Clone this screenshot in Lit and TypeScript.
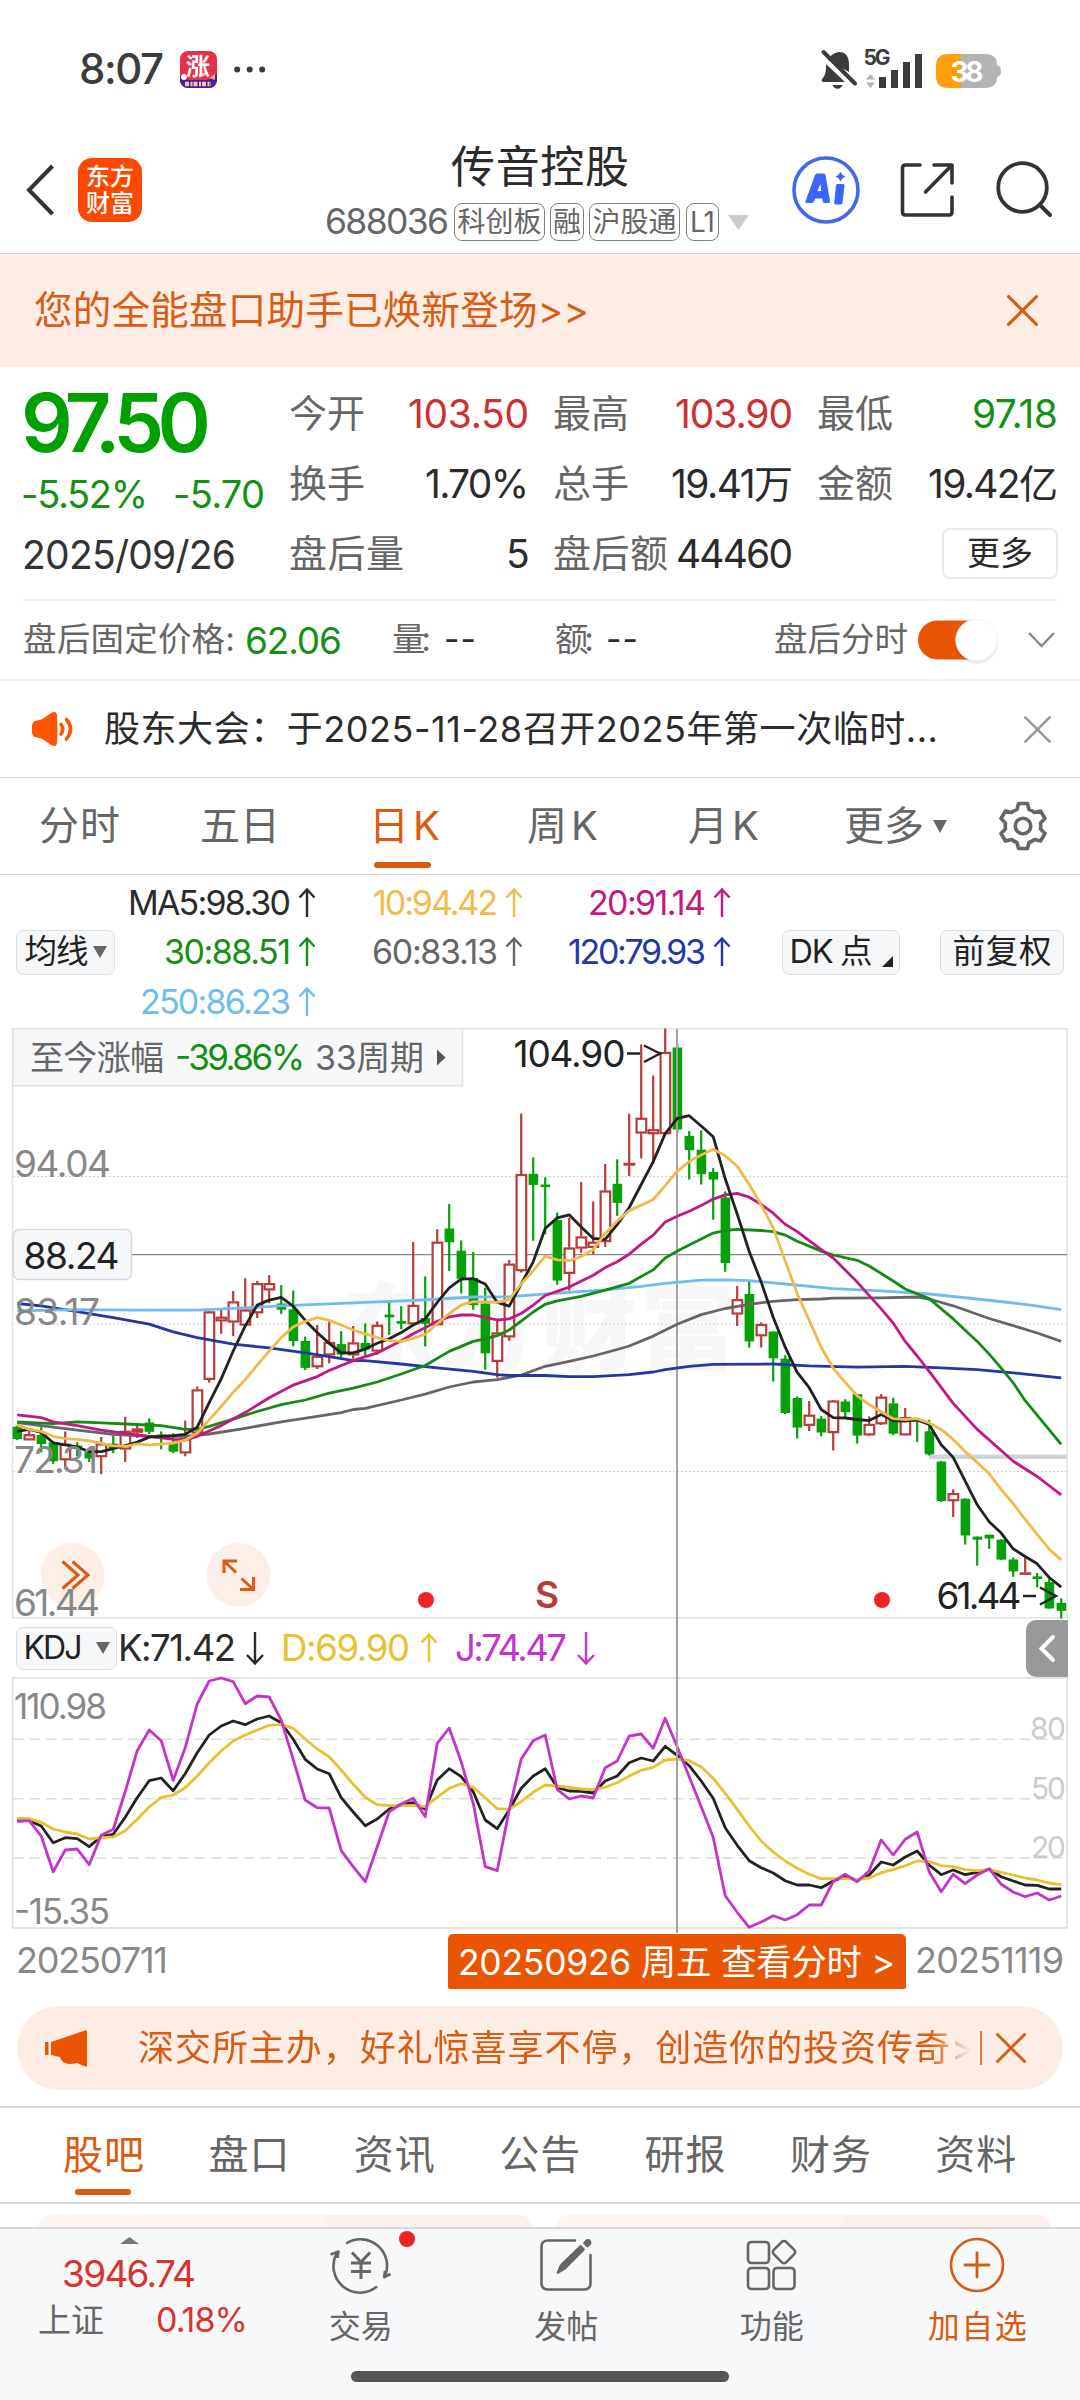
import { LitElement, html, svg, css } from "lit";
import { customElement, property } from "lit/decorators.js";

type Candle = [up: number, high: number, top: number, bottom: number, low: number];

// One entry per trading day: direction, high, body top, body bottom, low (plot units).
const CANDLES: Candle[] = [
  [0, 1060, 1064, 1094, 1098], [1, 1072, 1083, 1098, 1098], [0, 1064, 1085, 1107, 1130], [0, 1100, 1105, 1152, 1160],
  [1, 1075, 1108, 1150, 1174], [0, 1103, 1113, 1117, 1140], [0, 1120, 1128, 1145, 1155], [1, 1090, 1107, 1142, 1187],
  [0, 1087, 1108, 1118, 1132], [1, 1037, 1074, 1122, 1155], [1, 1055, 1068, 1078, 1092], [0, 1041, 1053, 1075, 1082],
  [0, 1075, 1084, 1089, 1122], [0, 1080, 1105, 1127, 1132], [1, 1047, 1092, 1132, 1140], [1, 958, 966, 1080, 1085],
  [1, 760, 762, 940, 948], [1, 758, 776, 787, 820], [1, 708, 736, 790, 826], [1, 675, 757, 798, 800],
  [1, 682, 688, 766, 779], [1, 667, 688, 706, 740], [0, 693, 742, 756, 768], [0, 707, 757, 838, 853],
  [0, 827, 840, 908, 915], [1, 797, 878, 907, 912], [1, 788, 842, 876, 897], [0, 813, 848, 873, 882],
  [1, 800, 843, 876, 885], [0, 793, 845, 860, 880], [1, 788, 797, 866, 875], [0, 738, 771, 776, 823],
  [0, 748, 788, 792, 808], [1, 580, 745, 795, 797], [0, 670, 780, 793, 853], [1, 547, 580, 797, 798],
  [0, 481, 546, 580, 656], [0, 576, 604, 675, 715], [0, 606, 675, 744, 757], [0, 700, 742, 870, 914],
  [1, 785, 817, 893, 935], [1, 627, 637, 829, 838], [1, 244, 403, 656, 660], [0, 359, 403, 430, 577],
  [0, 411, 431, 435, 560], [0, 503, 524, 680, 692], [1, 517, 595, 663, 707], [1, 423, 566, 597, 608],
  [1, 474, 580, 595, 612], [1, 376, 446, 580, 593], [0, 364, 429, 477, 512], [1, 245, 374, 380, 408],
  [1, 64, 256, 296, 362], [1, 145, 286, 298, 376], [1, 22, 84, 298, 300], [0, 60, 73, 285, 297],
  [0, 290, 304, 339, 417], [0, 288, 340, 402, 430], [0, 387, 398, 416, 522], [0, 448, 465, 634, 658],
  [1, 695, 730, 769, 800], [0, 683, 717, 839, 856], [1, 790, 795, 826, 856], [0, 814, 815, 883, 945],
  [0, 876, 886, 1026, 1030], [0, 984, 989, 1064, 1094], [1, 996, 1032, 1060, 1074], [0, 1035, 1043, 1077, 1088],
  [1, 993, 995, 1079, 1125], [0, 991, 998, 1024, 1038], [0, 978, 979, 1085, 1107], [1, 1036, 1056, 1085, 1087],
  [1, 977, 985, 1056, 1058], [0, 987, 1003, 1080, 1085], [1, 1014, 1038, 1085, 1086], [0, 1040, 1044, 1048, 1103],
  [0, 1045, 1076, 1134, 1138], [0, 1152, 1155, 1256, 1260], [1, 1227, 1237, 1257, 1299], [0, 1250, 1252, 1346, 1371],
  [0, 1350, 1351, 1357, 1426], [0, 1345, 1346, 1354, 1382], [0, 1357, 1359, 1409, 1411], [0, 1405, 1411, 1440, 1455],
  [1, 1400, 1444, 1447, 1447], [0, 1445, 1455, 1459, 1483], [0, 1460, 1470, 1537, 1538], [0, 1511, 1524, 1543, 1564],
];

const MA5 = [1075, 1070, 1078, 1105, 1110, 1116, 1128, 1128, 1120, 1112, 1103, 1090, 1088, 1086, 1083, 1064, 1000, 938, 865, 800, 745, 732, 725, 748, 785, 817, 845, 870, 870, 860, 845, 833, 817, 797, 781, 738, 700, 677, 676, 690, 738, 748, 690, 632, 545, 517, 509, 541, 571, 573, 535, 490, 430, 370, 297, 257, 250, 277, 305, 415, 507, 605, 685, 777, 855, 921, 961, 1018, 1039, 1040, 1044, 1047, 1031, 1047, 1048, 1045, 1057, 1110, 1143, 1205, 1267, 1311, 1341, 1382, 1402, 1421, 1457, 1482];
const MA10 = [1058, 1070, 1075, 1088, 1094, 1096, 1100, 1106, 1113, 1114, 1108, 1110, 1108, 1106, 1098, 1080, 1045, 1010, 973, 940, 902, 865, 830, 802, 788, 778, 785, 797, 810, 820, 830, 838, 840, 832, 821, 794, 767, 745, 736, 737, 738, 730, 690, 655, 617, 627, 629, 618, 600, 558, 525, 498, 484, 469, 433, 395, 370, 353, 338, 355, 382, 430, 483, 543, 630, 715, 785, 855, 910, 947, 982, 1005, 1024, 1042, 1044, 1042, 1053, 1070, 1096, 1128, 1156, 1186, 1227, 1264, 1305, 1344, 1383, 1411];

// Slower averages, as day index / value pairs.
const MA20 = [0, 1032, 2, 1039, 3, 1050, 5, 1060, 7, 1072, 9, 1080, 11, 1088, 13, 1096, 14, 1098, 15, 1088, 17, 1060, 19, 1026, 21, 987, 23, 954, 25, 932, 26, 916, 28, 890, 30, 870, 32, 838, 33, 820, 34, 804, 35, 787, 36, 776, 37, 771, 38, 771, 39, 777, 40, 784, 41, 781, 42, 767, 43, 745, 44, 720, 46, 698, 48, 667, 49, 647, 50, 632, 51, 612, 52, 586, 53, 562, 54, 528, 55, 513, 56, 500, 57, 485, 58, 468, 59, 457, 60, 453, 61, 463, 62, 482, 63, 505, 64, 534, 65, 553, 67, 600, 68, 622, 70, 685, 72, 755, 73, 792, 74, 840, 75, 878, 76, 918, 78, 1002, 80, 1070, 82, 1125, 83, 1153, 85, 1193, 87, 1241];
const MA30 = [0, 1050, 3, 1055, 5, 1050, 7, 1053, 10, 1057, 12, 1060, 14, 1070, 15, 1070, 16, 1062, 18, 1043, 20, 1023, 22, 1005, 24, 993, 26, 975, 28, 962, 30, 946, 32, 925, 34, 903, 36, 866, 38, 840, 39, 833, 40, 825, 41, 810, 42, 787, 43, 763, 44, 743, 45, 734, 47, 722, 49, 706, 51, 688, 53, 653, 54, 622, 55, 604, 57, 572, 58, 557, 59, 550, 60, 547, 62, 550, 63, 553, 64, 562, 65, 578, 67, 604, 68, 614, 70, 628, 71, 643, 73, 682, 74, 703, 76, 728, 78, 781, 80, 840, 81, 873, 82, 910, 83, 948, 84, 995, 87, 1109];
const MA60 = [0, 1052, 2, 1060, 5, 1072, 8, 1083, 11, 1088, 14, 1088, 16, 1082, 19, 1067, 22, 1050, 25, 1036, 27, 1026, 28, 1018, 29, 1015, 32, 993, 34, 978, 36, 959, 38, 946, 40, 940, 42, 928, 44, 905, 46, 892, 48, 878, 50, 861, 51, 852, 53, 826, 55, 795, 57, 770, 59, 754, 61, 743, 63, 735, 65, 731, 67, 729, 68, 727, 72, 726, 75, 724, 76, 729, 78, 747, 81, 780, 83, 799, 85, 818, 87, 840];
const MA120 = [0, 741, 2, 747, 5, 762, 8, 778, 11, 795, 13, 815, 15, 830, 18, 847, 21, 857, 24, 870, 26, 880, 28, 890, 29, 890, 32, 899, 35, 909, 38, 918, 40, 927, 41, 929, 44, 929, 46, 932, 48, 932, 51, 927, 53, 920, 54, 914, 56, 905, 58, 900, 63, 899, 66, 904, 70, 907, 74, 905, 77, 909, 80, 914, 83, 922, 87, 935];
const MA250 = [0, 760, 5, 757, 10, 758, 15, 758, 19, 752, 22, 747, 26, 742, 29, 738, 33, 733, 38, 724, 41, 723, 45, 714, 49, 705, 52, 696, 54, 688, 57, 680, 59, 679, 61, 681, 64, 690, 68, 702, 72, 708, 76, 716, 80, 729, 84, 743, 87, 757];

const J = [665, 662, 708, 815, 750, 747, 794, 706, 688, 575, 452, 390, 422, 541, 443, 312, 243, 234, 245, 311, 288, 291, 360, 478, 600, 623, 624, 752, 800, 845, 740, 635, 612, 595, 650, 430, 384, 485, 610, 800, 812, 630, 477, 422, 405, 568, 597, 588, 594, 503, 483, 408, 402, 445, 355, 440, 530, 620, 712, 887, 937, 982, 966, 947, 960, 944, 915, 915, 845, 823, 845, 812, 720, 765, 718, 696, 815, 875, 823, 851, 825, 806, 853, 876, 890, 879, 900, 888];
const K = [660, 662, 678, 728, 713, 716, 740, 710, 703, 652, 593, 542, 534, 572, 521, 458, 405, 378, 363, 374, 357, 348, 368, 418, 478, 507, 521, 593, 636, 677, 657, 627, 614, 608, 628, 540, 506, 530, 575, 660, 686, 630, 565, 528, 506, 562, 573, 574, 579, 543, 528, 488, 474, 483, 439, 466, 497, 543, 595, 683, 736, 782, 803, 819, 842, 855, 855, 863, 843, 830, 840, 825, 786, 795, 771, 753, 795, 824, 810, 824, 817, 808, 830, 843, 855, 856, 867, 867];
const D = [655, 656, 667, 687, 696, 702, 717, 713, 711, 692, 658, 621, 592, 585, 563, 528, 488, 453, 423, 405, 390, 376, 373, 385, 417, 447, 470, 510, 553, 592, 614, 617, 617, 616, 620, 592, 565, 551, 562, 593, 626, 628, 605, 577, 555, 558, 562, 567, 569, 562, 548, 528, 511, 502, 480, 477, 482, 501, 535, 580, 628, 678, 723, 756, 783, 805, 823, 836, 836, 836, 838, 834, 818, 809, 797, 783, 785, 797, 800, 809, 812, 809, 817, 825, 834, 840, 849, 854];

const dayX = (i: number) => 17.2 + 12 * i;
const priceY = (v: number) => +(v / 2.6133 - 8).toFixed(1);
const kdjY = (v: number) => +(v / 3 - 77).toFixed(1);
const series = (values: number[], y: (v: number) => number) => values.map((v, i) => `${dayX(i)},${y(v)}`).join(" ");
const pairs = (flat: number[]) => {
  const out: string[] = [];
  for (let n = 0; n < flat.length; n += 2) out.push(`${dayX(flat[n])},${priceY(flat[n + 1])}`);
  return out.join(" ");
};

/** Sets a run of text to an exact width by spreading the letter spacing. */
@customElement("fit-text")
class FitText extends LitElement {
  @property({ type: Number }) w = 0;
  @property() text = "";
  static styles = css`
    :host { display: inline-block; white-space: nowrap; flex: none; }
    span { display: inline-block; white-space: pre; }
  `;
  render() {
    return html`<span>${this.text}</span>`;
  }
  updated() {
    const span = this.renderRoot.querySelector("span")!;
    span.style.letterSpacing = "0px";
    const gap = (this.w - span.getBoundingClientRect().width) / Math.max(1, [...this.text].length - 1);
    span.style.letterSpacing = `${gap.toFixed(3)}px`;
    this.style.width = `${this.w}px`;
  }
}

const fit = (text: string, w: number, cls = "") => html`<fit-text class=${cls} .text=${text} .w=${w}></fit-text>`;
const upArrow = html`<svg class="arrow" width="18" height="30" viewBox="0 0 18 30"><path d="M9 29V2M1.5 9.5 9 1.5l7.5 8" /></svg>`;
const downArrow = html`<svg class="arrow" width="18" height="33" viewBox="0 0 18 33"><path d="M9 0v31M1 23l8 8.500 8-8.500" /></svg>`;

/** Daily candles with moving averages. */
@customElement("price-chart")
class PriceChart extends LitElement {
  static styles = css`
    :host { display: block; height: 590px; }
    svg { display: block; overflow: visible; }
    text { font-family: Inter, "Noto Sans CJK SC", sans-serif; font-size: 37px; }
    .frame { fill: none; stroke: #e2e2e2; stroke-width: 1.5; }
    .grid { stroke: #d4d4d4; stroke-width: 1; stroke-dasharray: 2 2; }
    .cross { stroke: #868686; stroke-width: 1.3; }
    .vcross { stroke: #a4a4a4; stroke-width: 2; }
    .axis { fill: #888; }
    .mark { fill: #222; }
    .line { fill: none; stroke-width: 2.8; stroke-linejoin: round; }
    .up { stroke: #b93a38; fill: #fff; stroke-width: 2.2; }
    .down { stroke: #06a00a; fill: #06a00a; stroke-width: 2.2; }
    .pen { fill: none; stroke: #222; stroke-width: 2.4; }
    .act { fill: none; stroke: #dc5a14; stroke-width: 3; }
    .halo { fill: #fdefe7; }
    .dot { fill: #ee2424; }
    .sell { fill: #b93a38; font-weight: 600; }
    .strip { fill: #f7f8fa; stroke: #e0e2e5; stroke-width: 1.5; }
    .cap { font-size: 34px; fill: #666; }
    .loss { font-size: 35px; fill: #109010; }
    .water { font-size: 96px; font-weight: 900; fill: #f7f7f7; }
  `;
  render() {
    const body = CANDLES.map(([up, h, t, b, l], i) => {
      const x = dayX(i);
      const top = priceY(t), bot = priceY(b);
      if (!up) return svg`<g class="down"><path d="M${x} ${priceY(h)}V${priceY(l)}"/><rect x=${x - 3.5} y=${top + 0.7} width="7.4" height=${Math.max(0.4, bot - top - 1.4)} /></g>`;
      return svg`<g class="up"><path d="M${x} ${priceY(h)}V${top}M${x} ${bot}V${priceY(l)}"/><rect x=${x - 4.6} y=${top + 0.8} width="9.600" height=${Math.max(0.4, bot - top - 1.6)} /></g>`;
    });
    const line = (points: string, color: string) => svg`<polyline class="line" points=${points} stroke=${color} />`;
    return html`<svg width="1080" height="590" viewBox="0 0 1080 590">
      <text class="water" x="342" y="335" textLength="394">东方财富</text>
      <rect class="frame" x="12.500" y="0.700" width="1054.500" height="589" />
      <path class="grid" d="M13 148.500H1067M13 296H1067M13 443.500H1067" />
      <rect x="929" y="426.500" width="138" height="4.500" fill="#cfd2d7" />
      <path class="cross" d="M131 226.600H1067" />
      ${body}
      <path d="M677 1V589" class="vcross" />
      ${line(pairs(MA60), "#666")}
      ${line(pairs(MA120), "#2338a4")}
      ${line(pairs(MA250), "#70bcf0")}
      ${line(pairs(MA30), "#148c14")}
      ${line(pairs(MA20), "#c01a82")}
      ${line(series(MA5, priceY), "#222")}
      ${line(series(MA10, priceY), "#f0ba4a")}
      <path class="strip" d="M13 .7H462.500V57.700H13z" />
      <text class="cap" x="30" y="42" textLength="134">至今涨幅</text>
      <text class="loss" x="175" y="42" textLength="130">-39.86%</text>
      <text class="cap" x="315" y="42" textLength="109">33周期</text>
      <path d="M437 21.500v16l8.500-8z" fill="#555" />
      <circle class="halo" cx="72.500" cy="547" r="32" />
      <path class="act" d="M62.500 533.500 78 547 62.500 560.500M72.500 533.500 88 547 72.500 560.500" />
      <circle class="halo" cx="238.500" cy="547" r="32" />
      <path class="act" d="M224 545V533H237M224.500 533.500 236 544.500M253.500 549V561.500H240M253 561 241.500 550.500" />
      <text class="axis" x="14" y="148.500" textLength="97">94.04</text>
      <text class="axis" x="14" y="296.500" textLength="86">83.17</text>
      <text class="axis" x="14" y="444.500" textLength="84">72.31</text>
      <text class="axis" x="14" y="587.500" textLength="86">61.44</text>
      <rect x="13.500" y="201.500" width="118" height="50" rx="6" fill="#f7f8fa" stroke="#d6d9dd" stroke-width="1.500" />
      <text class="mark" x="23.500" y="241" textLength="96">88.24</text>
      <text class="mark" x="513.500" y="39" textLength="112">104.90</text>
      <path class="pen" d="M627 25.500H640M644 17.500 660 25.500 644 34" />
      <text class="mark" x="936.500" y="581" textLength="85">61.44</text>
      <path class="pen" d="M1023 568H1036M1040 559.500 1056 568 1040 576.500" />
      <circle class="dot" cx="426" cy="572" r="8" />
      <circle class="dot" cx="882" cy="572" r="8" />
      <text class="sell" x="535" y="580" textLength="25">S</text>
    </svg>`;
  }
}

/** Oscillator pane below the candles. */
@customElement("kdj-chart")
class KdjChart extends LitElement {
  static styles = css`
    :host { display: block; height: 253px; }
    svg { display: block; overflow: visible; }
    text { font-family: Inter, sans-serif; font-size: 35px; fill: #888; }
    .level { font-size: 30px; fill: #ccc; }
    .frame { fill: none; stroke: #e0e0e0; stroke-width: 1.7; }
    .grid { stroke: #dcdcdc; stroke-width: 1.500; stroke-dasharray: 10.500 6; }
    .line { fill: none; stroke-width: 2.8; stroke-linejoin: round; }
  `;
  render() {
    return html`<svg width="1080" height="253" viewBox="0 0 1080 253">
      <rect class="frame" x="12.500" y="0.800" width="1054.500" height="250.200" />
      <path class="grid" d="M13 62.300H1067M13 121.700H1067M13 181H1067" />
      <text x="14" y="42" textLength="93">110.98</text>
      <text x="14" y="247" textLength="96">-15.35</text>
      <text class="level" x="1030" y="62" textLength="36">80</text>
      <text class="level" x="1031" y="122" textLength="35">50</text>
      <text class="level" x="1031" y="181" textLength="35">20</text>
      <polyline class="line" stroke="#222" points=${series(K, kdjY)} />
      <polyline class="line" stroke="#e8c030" points=${series(D, kdjY)} />
      <polyline class="line" stroke="#c334cb" points=${series(J, kdjY)} />
    </svg>`;
  }
}

@customElement("app-root")
class AppRoot extends LitElement {
  static styles = css`
    :host { display: block; width: 1080px; height: 2400px; overflow: hidden; background: #fff; color: #2b2b2b; font-family: Inter, "Noto Sans CJK SC", sans-serif; font-size: 38px; line-height: 1; }
    * { box-sizing: border-box; }
    svg { display: block; flex: none; overflow: visible; }
    .row { display: flex; align-items: center; }
    .status { height: 122px; padding: 16px 78px 0 79px; color: #3c3c3c; }
    .clock { font-size: 42px; font-weight: 500; margin-right: 16px; }
    .appicon { margin-right: 17px; }
    .grow { flex: 1; }
    .header { height: 132px; border-bottom: 1.500px solid #d5d8d8; display: grid; grid-template-columns: 325px 426px 329px; }
    .left { padding: 4px 0 0 26px; gap: 24px; }
    .logo { width: 64px; height: 64px; border-radius: 14px; background: #fd4800; color: #fff; font-size: 24px; line-height: 27px; font-weight: 500; text-align: center; padding-top: 5px; }
    .mid { display: flex; flex-direction: column; }
    .name { font-size: 44px; height: 64px; line-height: 64px; margin: 13px 0 0 126px; }
    .sub { color: #666; font-size: 35.500px; height: 38px; margin-top: 4px; }
    .sub > fit-text { margin-right: 5px; }
    .tag { height: 38px; border: 1.500px solid #808080; border-radius: 8px; font-size: 28px; display: flex; align-items: center; justify-content: center; margin-right: 5px; flex: none; }
    .t3 { width: 91px; } .t1 { width: 34px; } .tl { width: 33px; margin-left: 1px; }
    .caret { margin-left: 4px; }
    .right { padding: 4px 0 0 43px; }
    .banner { height: 113px; background: #fdede4; color: #d95c14; padding: 0 42px 0 34px; justify-content: space-between; font-size: 38.500px; }
    .quote { display: flex; padding: 11px 22px 0 24px; height: 232px; }
    .summary { width: 265px; color: #149114; }
    .price { height: 90px; display: flex; align-items: center; font-size: 81px; font-weight: 600; color: #00a000; margin-left: -3px; }
    .change { height: 52px; display: flex; align-items: center; gap: 25px; font-size: 38px; margin-left: -3px; }
    .date { height: 68px; display: flex; align-items: center; color: #333; font-size: 39px; margin-left: -2px; }
    .stats { display: grid; grid-template-columns: 240px 240px 241px; grid-template-rows: repeat(3, 70px); column-gap: 24px; font-size: 39px; }
    .stat { display: flex; align-items: center; justify-content: space-between; color: #666; white-space: nowrap; }
    .stat .k { font-size: 38px; }
    .ink { color: #2b2b2b; } .red { color: #d02f2f; } .green { color: #149114; }
    .more { justify-self: end; align-self: center; width: 116px; height: 51px; border: 2px solid #e7e9eb; border-radius: 8px; font-size: 33px; color: #2b2b2b; display: flex; align-items: center; justify-content: center; }
    .after { display: grid; align-items: center; margin: 0 23px; height: 80px; border-top: 2px solid #eee; color: #666; font-size: 33.500px; white-space: nowrap; grid-template-columns: 222px 147px 52px 111px 51px 168px 144px 110px 30px; }
    .fixed { font-size: 37px; color: #149114; }
    .notice { height: 99px; border-top: 2px solid #eee; border-bottom: 1.500px solid #d6d6d6; padding: 0 29px 0 31px; font-size: 36px; }
    .notice fit-text { margin-left: 31px; }
    .tabs { height: 97px; border-bottom: 1.500px solid #d6d6d6; color: #666; font-size: 40px; display: grid; grid-template-columns: 200px 169px 158px 161px 156px 155px 81px; }
    .tab { position: relative; display: flex; align-items: center; }
    .tabs .tab:first-child { padding-left: 39px; }
    .on { color: #dc5a10; }
    .on::after { content: ""; position: absolute; width: 57px; height: 6.500px; border-radius: 3px; background: #dc5a10; bottom: 6px; left: 5px; }
    .k2 { display: flex; gap: 4px; }
    .ma { height: 153px; display: grid; grid-template-columns: 115px 201px 207px 208px 169px 180px; grid-template-rows: repeat(3, 49.500px); padding-top: 3px; font-size: 34px; align-items: center; }
    .val { display: flex; align-items: center; justify-content: flex-end; gap: 7px; }
    .arrow { fill: none; stroke: currentColor; stroke-width: 2.400; }
    .btn { height: 45px; border: 1.500px solid #dcdfe3; border-radius: 7px; background: #f6f7f9; font-size: 32.500px; display: flex; align-items: center; justify-content: center; color: #222; }
    .b1 { grid-column: 1; grid-row: 2; margin-left: 16px; gap: 4px; }
    .b2 { grid-column: 5; grid-row: 2; margin-left: 51px; gap: 9px; }
    .b3 { grid-column: 6; grid-row: 2; margin: 0 16px 0 40px; }
    .corner { margin-top: 18px; }
    .first { grid-column: 2; }
    .c5 { color: #2b2b2b; } .c10 { color: #f0bb4d; } .c20 { color: #c2187f; } .c30 { color: #149114; } .c60 { color: #666; } .c120 { color: #2338a4; } .c250 { color: #70bcf0; }
    .charts { position: relative; }
    .cursor { position: absolute; left: 676px; top: 588px; width: 2px; height: 317px; background: #a0a2a4; }
    .kdjbar { height: 59px; padding: 1px 12px 0 16px; font-size: 36.500px; }
    .kdjbar .btn { width: 101px; height: 43px; gap: 13px; font-size: 32px; margin-right: 1px; }
    .kval { display: flex; align-items: center; gap: 10px; margin-right: 17px; }
    .kd { color: #e8c030; } .kj { color: #c334cb; }
    .collapse { width: 42px; height: 57px; background: #999; border-radius: 10px 0 0 10px; display: flex; align-items: center; justify-content: center; }
    .dates { height: 76px; padding: 0 16px; display: flex; color: #888; font-size: 36px; }
    .dates > fit-text { height: 60px; line-height: 60px; }
    .pick { margin: 4px 9px 0 280px; width: 458px; height: 55px; background: #e95502; color: #fff; border-radius: 5px 5px 2px 2px; line-height: 58px; padding-left: 10px; font-size: 35.500px; }
    .promo { margin: 0 17px; height: 84px; border-radius: 42px; background: #fdede4; color: #d95c14; padding: 0 36px 0 28px; font-size: 36px; }
    .marquee { margin-left: 51px; width: 842px; white-space: nowrap; letter-spacing: .95px; line-height: 50px; -webkit-mask-image: linear-gradient(90deg, #000 94%, transparent 99%); mask-image: linear-gradient(90deg, #000 94%, transparent 99%); }
    .bar { width: 1.500px; height: 34px; background: #dc7a40; margin-right: 14px; }
    .nav { margin-top: 16px; height: 98px; border-top: 2px solid #d9dadb; border-bottom: 2px solid #d9dadb; display: grid; grid-template-columns: repeat(7, 145.400px); padding-left: 63px; font-size: 40px; color: #666; }
    .nav .on::after { bottom: 7px; left: 12px; width: 56px; }
    .cards { height: 23px; padding: 11px 30px 0 38px; gap: 24px; display: flex; }
    .card { width: 494px; height: 12px; border-radius: 14px 14px 0 0; background: linear-gradient(90deg, #fff6f2 0 58%, #fdf1ee 58%); }
    .footer { height: 173px; border-top: 2px solid #d6d8dc; background: #f7f8fa; display: grid; grid-template-columns: 258px repeat(4, 205.500px); position: relative; color: #666; font-size: 32px; }
    .index { display: flex; flex-direction: column; }
    .index .tri { margin: 8px 0 0 120px; }
    .idx { font-size: 37px; color: #d9332f; margin: 12px 0 0 62px; height: 36px; line-height: 36px; }
    .idxrow { display: flex; justify-content: space-between; align-items: center; width: 210px; margin: 3px 0 0 38px; height: 50px; font-size: 33px; }
    .idxrow fit-text + fit-text { color: #d9332f; font-size: 34px; }
    .item { display: flex; flex-direction: column; align-items: center; padding-top: 4px; position: relative; }
    .item span { height: 36px; line-height: 36px; margin-top: 12px; }
    .badge { position: absolute; left: 140.500px; top: 2px; width: 16px; height: 16px; border-radius: 50%; background: #ee2424; }
    .add { color: #d95a12; }
    .ic { fill: none; stroke: currentColor; stroke-width: 2.600; stroke-linecap: round; stroke-linejoin: round; }
    .home { position: absolute; left: 351px; top: 142px; width: 378px; height: 11px; border-radius: 6px; background: #555756; }
    .x { fill: none; stroke: currentColor; stroke-width: 3; stroke-linecap: round; }
    .grey { color: #999; }
  `;

  render() {
    const stat = (k: string, kw: number, v: string, vw: number, cls: string) =>
      html`<div class="stat">${fit(k, kw, "k")}${fit(v, vw, cls)}</div>`;
    const ma = (t: string, w: number, cls: string) => html`<div class="val ${cls}">${fit(t, w)}${upArrow}</div>`;
    const close = (s: number, cls = "") =>
      html`<svg class="x ${cls}" width=${s} height=${s} viewBox="0 0 30 30"><path d="M1.500 1.500 28.500 28.500M28.500 1.500 1.500 28.500" /></svg>`;
    const nav = ["股吧", "盘口", "资讯", "公告", "研报", "财务", "资料"];
    return html`
      <div class="status row">
        ${fit("8:07", 85, "clock")}
        <svg class="appicon" width="37" height="37" viewBox="0 0 37 37">
          <defs><clipPath id="ai"><rect width="37" height="37" rx="8" /></clipPath></defs>
          <g clip-path="url(#ai)">
            <rect width="37" height="37" fill="#e8304a" />
            <path d="M0 24 9 29 28 29 37 23V37H0z" fill="#4a1f9e" />
            <circle cx="4" cy="26" r="3" fill="#fff" /><path d="M29 27l6-4v6z" fill="#f8a56a" />
            <text x="6" y="24" font-size="24" font-weight="700" fill="#fff" font-family="Noto Sans CJK SC">涨</text>
            <path d="M5 33H31" stroke="#f6c8a0" stroke-width="4.500" stroke-dasharray="4 1.500 2 1" />
          </g>
        </svg>
        <svg width="32" height="7" viewBox="0 0 32 7" fill="#3c3c3c"><circle cx="3.200" cy="3.500" r="3" /><circle cx="15.700" cy="3.500" r="3" /><circle cx="28.200" cy="3.500" r="3" /></svg>
        <div class="grow"></div>
        <svg width="181" height="40" viewBox="822 47 181 40">
          <path d="M829 58c2-4 5-7 11-8 8 0 10 6 10 13v7zM827 62 846 80H824c-2-1-2-2 0-4 3-4 3-8 3-14z" fill="#3c3c3c" />
          <path d="M833.500 83h10c-2 5-8 5-10 0z" fill="#3c3c3c" />
          <path d="M824.500 50 856 81.500" stroke="#3c3c3c" stroke-width="4" stroke-linecap="round" />
          <text x="864.500" y="63" font-size="21" font-weight="700" fill="#3c3c3c" textLength="27">5G</text>
          <path d="M867 77.500 871.500 72 876 77.500zM867 80.500H876L871.500 86z" fill="#b4b4b4" />
          <path d="M880 75h7v11h-7zM892 68h7v18h-7zM904 60h7v26h-7zM916 52h7v34h-7z" fill="#3c3c3c" />
          <path d="M962 52h24q12 0 12 11 4 1 4 6t-4 6q0 11-12 11H962z" fill="#b3b3b3" />
          <path d="M962 52H949q-12 0-12 12v10q0 12 12 12h13z" fill="#ff9f0a" />
          <text x="951.500" y="79.500" font-size="28" font-weight="700" fill="#fff" textLength="33">38</text>
        </svg>
      </div>

      <div class="header">
        <div class="left row">
          <svg width="28" height="52" viewBox="0 0 28 52"><path d="M26.500 2 3 26 26.500 50" fill="none" stroke="#333" stroke-width="4" /></svg>
          <div class="logo">东方<br />财富</div>
        </div>
        <div class="mid">
          <div class="name">${fit("传音控股", 178)}</div>
          <div class="sub row">
            ${fit("688036", 124)}
            <span class="tag t3">科创板</span><span class="tag t1">融</span><span class="tag t3">沪股通</span><span class="tag tl">${fit("L1", 25)}</span>
            <svg class="caret" width="21" height="15" viewBox="0 0 21 15"><path d="M0 0H21L10.500 15z" fill="#ccc" /></svg>
          </div>
        </div>
        <div class="right row">
          <svg width="258" height="68" viewBox="794 156 258 68">
            <circle cx="826" cy="190" r="32" fill="none" stroke="#4169e8" stroke-width="3.600" />
            <path fill="#3a66fb" fill-rule="evenodd" d="M815 175q.5-1.500 2-1.500h6.500q1.800 0 2 1.500l4.500 26q.3 2-1.500 2h-4q-1.500 0-1.700-1.500l-.5-3h-7l-1.500 3q-.7 1.500-2 1.500h-5q-2 0-1.200-2zM817.500 191h3.800l-1-7z" />
            <path fill="#3a66fb" d="M837.500 184h5.500q1.700 0 1.500 1.700l-2 17q-.2 1.700-1.800 1.700h-5q-1.800 0-1.500-1.700l1.700-17q.2-1.700 1.600-1.700zM840.500 171.500q1.500 4 5 5-3.500 1.200-5 5-1.500-3.800-5-5 3.500-1 5-5z" />
            <path fill="none" stroke="#333" stroke-width="3.600" stroke-linecap="round" stroke-linejoin="round" d="M920 165H905.500q-3 0-3 3V212q0 3 3 3H949q3 0 3-3V197M934 165H952V183M951 166 925.500 192" />
            <circle cx="1022.500" cy="187.500" r="24.300" fill="none" stroke="#333" stroke-width="3.800" />
            <path d="M1040 205 1050 215" stroke="#333" stroke-width="4" stroke-linecap="round" />
          </svg>
        </div>
      </div>

      <div class="banner row">${fit("您的全能盘口助手已焕新登场>>", 555)}${close(31)}</div>

      <div class="quote">
        <div class="summary">
          <div class="price">${fit("97.50", 190)}</div>
          <div class="change">${fit("-5.52%", 127)}${fit("-5.70", 92)}</div>
          <div class="date">${fit("2025/09/26", 214)}</div>
        </div>
        <div class="stats">
          ${stat("今开", 76, "103.50", 121, "red")}${stat("最高", 76, "103.90", 118, "red")}${stat("最低", 76, "97.18", 86, "green")}
          ${stat("换手", 76, "1.70%", 104, "ink")}${stat("总手", 76, "19.41万", 122, "ink")}${stat("金额", 76, "19.42亿", 130, "ink")}
          ${stat("盘后量", 115, "5", 23, "ink")}${stat("盘后额", 115, "44460", 117, "ink")}
          <div class="more">更多</div>
        </div>
      </div>

      <div class="after">
        ${fit("盘后固定价格:", 212)}${fit("62.06", 97, "fixed")}
        ${fit("量:", 39)}${fit("--", 32, "ink")}${fit("额:", 39)}${fit("--", 32, "ink")}
        ${fit("盘后分时", 134)}
        <svg width="80" height="42" viewBox="0 0 80 42">
          <rect x="0" y="1.500" width="78" height="39" rx="19.500" fill="#ea5504" />
          <circle cx="58.500" cy="23.500" r="21.500" fill="#000" opacity=".07" />
          <circle cx="58.500" cy="21" r="20.800" fill="#fff" stroke="#eee" stroke-width=".8" />
        </svg>
        <svg width="27" height="16" viewBox="0 0 27 16"><path d="M1 1 13.500 14 26 1" fill="none" stroke="#888" stroke-width="2.400" /></svg>
      </div>

      <div class="notice row">
        <svg width="42" height="36" viewBox="0 0 42 36">
          <path d="M1 15q0-5 5-5.500 4-.2 7-2.500L20 2q6-3 6 3 1 13 0 26 0 6-6 3l-7-5q-3-2.300-7-2.500-5-.5-5-5.500z" fill="#fe5500" />
          <path d="M30 13.500q3.500 4.500 0 9.500M35.500 8.500q8 9.500 0 19.500" fill="none" stroke="#fe5500" stroke-width="3.600" stroke-linecap="round" />
        </svg>
        ${fit("股东大会：于2025-11-28召开2025年第一次临时...", 834)}
        <div class="grow"></div>${close(27, "grey")}
      </div>

      <div class="tabs">
        <div class="tab">${fit("分时", 81)}</div><div class="tab">${fit("五日", 80)}</div>
        <div class="tab on"><span class="k2"><span>日</span><span>K</span></span></div>
        <div class="tab"><span class="k2"><span>周</span><span>K</span></span></div>
        <div class="tab"><span class="k2"><span>月</span><span>K</span></span></div>
        <div class="tab">${fit("更多", 80)}<svg width="14" height="13" viewBox="0 0 14 13" style="margin-left:9px"><path d="M0 0H14L7 13z" fill="#666" /></svg></div>
        <div class="tab">
          <svg width="48" height="50" viewBox="0 0 48 50" fill="none" stroke="#666" stroke-width="3.600" stroke-linejoin="round">
            <path d="M19.500 2.500h9l1.500 6q3 1 5.500 3l6-1.500 4.500 7.500-4.500 4.500q.5 3 0 6l4.500 4.500-4.500 7.500-6-1.500q-2.500 2-5.500 3l-1.500 6h-9l-1.500-6q-3-1-5.500-3l-6 1.500L2 32.500 6.500 28q-.5-3 0-6L2 17.500 6.500 10l6 1.500q2.500-2 5.500-3z" />
            <circle cx="24" cy="25" r="7.800" />
          </svg>
        </div>
      </div>

      <div class="ma">
        <div class="btn b1">${fit("均线", 64)}<svg width="14" height="12" viewBox="0 0 14 12"><path d="M0 0H14L7 12z" fill="#666" /></svg></div>
        ${ma("MA5:98.30", 163, "c5 first")}${ma("10:94.42", 125, "c10")}${ma("20:91.14", 118, "c20")}
        ${ma("30:88.51", 127, "c30 first")}${ma("60:83.13", 126, "c60")}${ma("120:79.93", 138, "c120")}
        ${ma("250:86.23", 151, "c250 first")}
        <div class="btn b2">${fit("DK 点", 83)}<svg class="corner" width="11" height="11" viewBox="0 0 11 11"><path d="M11 0V11H0z" fill="#222" /></svg></div>
        <div class="btn b3">${fit("前复权", 99)}</div>
      </div>

      <div class="charts">
        <price-chart></price-chart>
        <div class="kdjbar row">
          <div class="btn">${fit("KDJ", 59)}<svg width="14" height="12" viewBox="0 0 14 12"><path d="M0 0H14L7 12z" fill="#666" /></svg></div>
          <div class="kval c5">${fit("K:71.42", 118)}${downArrow}</div>
          <div class="kval kd">${fit("D:69.90", 129)}${upArrow}</div>
          <div class="kval kj">${fit("J:74.47", 112)}${downArrow}</div>
          <div class="grow"></div>
          <div class="collapse"><svg width="16" height="27" viewBox="0 0 16 27"><path d="M14 2 2.500 13.500 14 25" fill="none" stroke="#fff" stroke-width="4" stroke-linecap="round" /></svg></div>
        </div>
        <kdj-chart></kdj-chart>
        <div class="cursor"></div>
      </div>

      <div class="dates">
        ${fit("20250711", 152)}
        <div class="pick">${fit("20250926 周五 查看分时 >", 437)}</div>
        ${fit("20251119", 149)}
      </div>

      <div class="promo row">
        <svg width="42" height="37" viewBox="0 0 42 37" fill="#e95502">
          <path d="M0 12h3.500v13H0zM6 12 40 0.500H42V36.500H40L32 33Q24 35 20 33 16 31 15 27L6 25z" />
        </svg>
        <div class="marquee">深交所主办，好礼惊喜享不停，创造你的投资传奇></div>
        <div class="bar"></div>${close(30)}
      </div>

      <div class="nav">${nav.map((t, i) => html`<div class="tab ${i === 0 ? "on" : ""}">${fit(t, 81)}</div>`)}</div>
      <div class="cards"><div class="card"></div><div class="card"></div></div>

      <div class="footer">
        <div class="index">
          <svg class="tri" width="19" height="7" viewBox="0 0 19 7"><path d="M0 7H19L9.500 0z" fill="#777" /></svg>
          ${fit("3946.74", 134, "idx")}
          <div class="idxrow">${fit("上证", 66)}${fit("0.18%", 92)}</div>
        </div>
        <div class="item">
          <svg class="ic" width="64" height="64" viewBox="0 0 64 64">
            <path d="M17.200 10.500A26.500 26.500 0 0 1 56 43M54.500 44.500 61.500 41M55 45 56 38M48 53.500A26.500 26.500 0 0 1 8 20M1.500 21.500 9.500 18.500 8.500 25" stroke-linecap="butt" />
            <path d="M23 19.500 32 29 41 19.500M32 29V46M22 30H42M22 38.500H42" stroke-width="3" stroke-linecap="butt" />
          </svg>
          <span>交易</span><i class="badge"></i>
        </div>
        <div class="item">
          <svg class="ic" width="64" height="64" viewBox="0 0 64 64">
            <path d="M41 7.500H14Q7.500 7.500 7.500 14V50Q7.500 56.500 14 56.500H50Q56.500 56.500 56.500 50V22" />
            <path d="M24 39.500 27 32.500 46.500 13.500 49.500 16.500 30 36zM50.500 10 53 7.500Q54.500 7 55.500 8T56 10.500L53.500 13z" fill="currentColor" />
          </svg>
          <span>发帖</span>
        </div>
        <div class="item">
          <svg class="ic" width="64" height="64" viewBox="0 0 64 64">
            <rect x="8" y="9" width="21" height="21" rx="3.500" /><rect x="8" y="35" width="21" height="21" rx="3.500" /><rect x="33.500" y="35" width="21" height="21" rx="3.500" />
            <rect x="35.300" y="10.300" width="17.500" height="17.500" rx="3" transform="rotate(45 44 19)" />
          </svg>
          <span>功能</span>
        </div>
        <div class="item add">
          <svg class="ic" width="64" height="64" viewBox="0 0 64 64"><circle cx="32" cy="32" r="26" /><path d="M32 20V44M20 32H44" stroke-width="2.800" /></svg>
          <span>${fit("加自选", 99)}</span>
        </div>
        <div class="home"></div>
      </div>
    `;
  }
}
